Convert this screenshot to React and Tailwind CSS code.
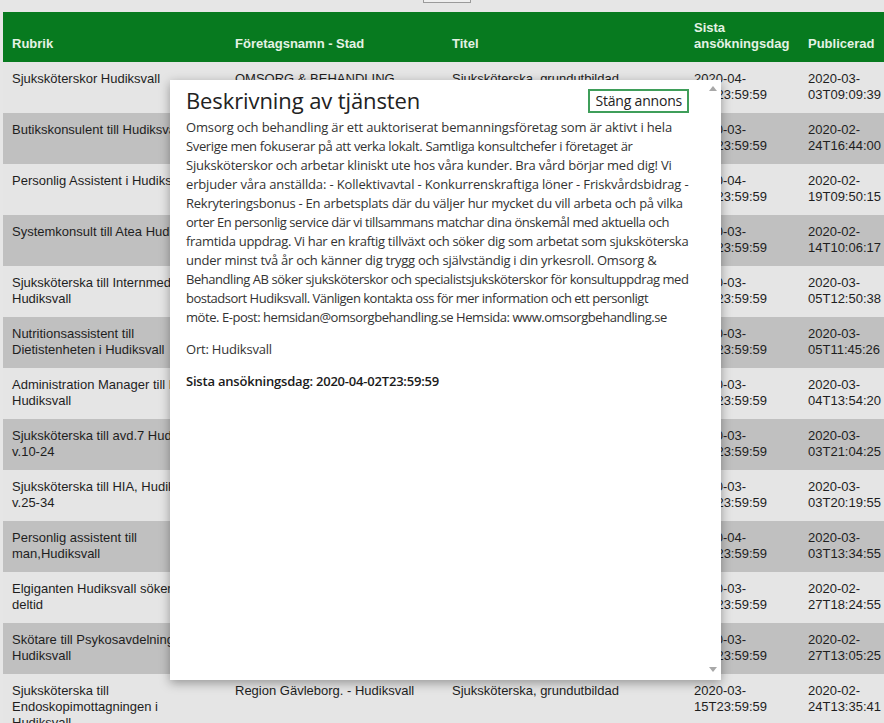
import React from 'react';

const rows = [
  { rubrik: ['Sjuksköterskor Hudiksvall'], foretag: ['OMSORG & BEHANDLING', 'AB - Hudiksvall'], titel: ['Sjuksköterska, grundutbildad'], sista: '2020-04-02T23:59:59', pub: '2020-03-03T09:09:39' },
  { rubrik: ['Butikskonsulent till Hudiksvall'], foretag: ['Elgiganten AB - Hudiksvall'], titel: ['Butikssäljare, elektronik'], sista: '2020-03-24T23:59:59', pub: '2020-02-24T16:44:00' },
  { rubrik: ['Personlig Assistent i Hudiksvall'], foretag: ['Humana Assistans AB -', 'Hudiksvall'], titel: ['Personlig assistent'], sista: '2020-04-19T23:59:59', pub: '2020-02-19T09:50:15' },
  { rubrik: ['Systemkonsult till Atea Hudiksvall'], foretag: ['Atea Sverige AB - Hudiksvall'], titel: ['Systemadministratör'], sista: '2020-03-15T23:59:59', pub: '2020-02-14T10:06:17' },
  { rubrik: ['Sjuksköterska till Internmedicin,', 'Hudiksvall'], foretag: ['Region Gävleborg. - Hudiksvall'], titel: ['Sjuksköterska, grundutbildad'], sista: '2020-03-22T23:59:59', pub: '2020-03-05T12:50:38' },
  { rubrik: ['Nutritionsassistent till', 'Dietistenheten i Hudiksvall'], foretag: ['Region Gävleborg. - Hudiksvall'], titel: ['Dietist'], sista: '2020-03-22T23:59:59', pub: '2020-03-05T11:45:26' },
  { rubrik: ['Administration Manager till H', 'Hudiksvall'], foretag: ['Hexatronic AB - Hudiksvall'], titel: ['Administratör'], sista: '2020-03-31T23:59:59', pub: '2020-03-04T13:54:20' },
  { rubrik: ['Sjuksköterska till avd.7 Hudiksvall', 'v.10-24'], foretag: ['Region Gävleborg. - Hudiksvall'], titel: ['Sjuksköterska, grundutbildad'], sista: '2020-03-17T23:59:59', pub: '2020-03-03T21:04:25' },
  { rubrik: ['Sjuksköterska till HIA, Hudiksvall', 'v.25-34'], foretag: ['Region Gävleborg. - Hudiksvall'], titel: ['Sjuksköterska, grundutbildad'], sista: '2020-03-17T23:59:59', pub: '2020-03-03T20:19:55' },
  { rubrik: ['Personlig assistent till', 'man,Hudiksvall'], foretag: ['Assistans AB - Hudiksvall'], titel: ['Personlig assistent'], sista: '2020-04-03T23:59:59', pub: '2020-03-03T13:34:55' },
  { rubrik: ['Elgiganten Hudiksvall söker säljare', 'deltid'], foretag: ['Elgiganten AB - Hudiksvall'], titel: ['Butikssäljare, elektronik'], sista: '2020-03-27T23:59:59', pub: '2020-02-27T18:24:55' },
  { rubrik: ['Skötare till Psykosavdelningen', 'Hudiksvall'], foretag: ['Region Gävleborg. - Hudiksvall'], titel: ['Skötare, psykiatri'], sista: '2020-03-27T23:59:59', pub: '2020-02-27T13:05:25' },
  { rubrik: ['Sjuksköterska till', 'Endoskopimottagningen i', 'Hudiksvall'], foretag: ['Region Gävleborg. - Hudiksvall'], titel: ['Sjuksköterska, grundutbildad'], sista: '2020-03-15T23:59:59', pub: '2020-02-24T13:35:41' },
];

// description lines, each with a small tracking tweak so the ragged edge follows the original
const bodyLines = [
  ['Omsorg och behandling är ett auktoriserat bemanningsföretag som är aktivt i hela', 'tracking-[-0.15px]'],
  ['Sverige men fokuserar på att verka lokalt. Samtliga konsultchefer i företaget är', 'tracking-[-0.35px]'],
  ['Sjuksköterskor och arbetar kliniskt ute hos våra kunder. Bra vård börjar med dig! Vi', 'tracking-[-0.2px]'],
  ['erbjuder våra anställda: - Kollektivavtal - Konkurrenskraftiga löner - Friskvårdsbidrag -', 'tracking-[-0.15px]'],
  ['Rekryteringsbonus - En arbetsplats där du väljer hur mycket du vill arbeta och på vilka', 'tracking-[-0.25px]'],
  ['orter En personlig service där vi tillsammans matchar dina önskemål med aktuella och', 'tracking-[-0.45px]'],
  ['framtida uppdrag. Vi har en kraftig tillväxt och söker dig som arbetat som sjuksköterska', 'tracking-[-0.3px]'],
  ['under minst två år och känner dig trygg och självständig i din yrkesroll. Omsorg &', 'tracking-[-0.25px]'],
  ['Behandling AB söker sjuksköterskor och specialistsjuksköterskor för konsultuppdrag med', 'tracking-[-0.45px]'],
  ['bostadsort Hudiksvall. Vänligen kontakta oss för mer information och ett personligt', 'tracking-[-0.5px]'],
  ['möte. E-post: hemsidan@omsorgbehandling.se Hemsida: www.omsorgbehandling.se', 'tracking-[-0.45px]'],
];

// splits a timestamp the way the narrow column wraps it
const splitDate = (d) => [d.slice(0, 8), d.slice(8)];

const Lines = ({ lines }) => (
  <>
    {lines.map((l, i) => (
      <div key={i} className="whitespace-nowrap">{l}</div>
    ))}
  </>
);

export default function App() {
  return (
    <div className="relative w-[884px] h-[723px] overflow-hidden bg-[#e6e6e6] font-['Liberation_Sans',Arial,sans-serif] text-[13px] leading-[16px] text-[#1e1e1e]">
      {/* scrolled-off button above the table */}
      <div className="flex h-[12px] items-start pl-[423px]">
        <div className="h-[3px] w-[48px] border-x border-b border-[#9a9a9a] bg-[#efefef]" />
      </div>

      <table className="ml-[3px] w-[891px] table-fixed border-collapse">
        <colgroup>
          <col className="w-[223px]" />
          <col className="w-[217px]" />
          <col className="w-[242px]" />
          <col className="w-[114px]" />
          <col className="w-[95px]" />
        </colgroup>
        <thead>
          <tr className="bg-[#077a1f] text-[#e4f2e4]">
            <th className="pl-[9px] pr-[9px] pt-[8px] pb-[10px] text-left align-bottom font-bold">Rubrik</th>
            <th className="pl-[9px] pr-[9px] pt-[8px] pb-[10px] text-left align-bottom font-bold">Företagsnamn - Stad</th>
            <th className="pl-[9px] pr-[9px] pt-[8px] pb-[10px] text-left align-bottom font-bold">Titel</th>
            <th className="pl-[9px] pr-[4px] pt-[8px] pb-[10px] text-left align-bottom font-bold">
              <div>Sista</div>
              <div>ansökningsdag</div>
            </th>
            <th className="pl-[9px] pr-[4px] pt-[8px] pb-[10px] text-left align-bottom font-bold">Publicerad</th>
          </tr>
        </thead>
        <tbody>
          {rows.map((r, i) => (
            <tr key={i} className={i % 2 === 0 ? 'bg-[#e5e5e5]' : 'bg-[#c0c0c0]'}>
              <td className="overflow-hidden pl-[9px] pt-[9px] pb-[10px] align-top"><Lines lines={r.rubrik} /></td>
              <td className="overflow-hidden pl-[9px] pt-[9px] pb-[10px] align-top"><Lines lines={r.foretag} /></td>
              <td className="overflow-hidden pl-[9px] pt-[9px] pb-[10px] align-top"><Lines lines={r.titel} /></td>
              <td className="overflow-hidden pl-[9px] pt-[9px] pb-[10px] align-top"><Lines lines={splitDate(r.sista)} /></td>
              <td className="overflow-hidden pl-[9px] pt-[9px] pb-[10px] align-top"><Lines lines={splitDate(r.pub)} /></td>
            </tr>
          ))}
        </tbody>
      </table>

      {/* job description dialog */}
      <div className="absolute left-[170px] top-[80px] flex h-[600px] w-[551px] bg-white shadow-[0_3px_10px_rgba(0,0,0,0.35)] font-['Segoe_UI','Open_Sans',sans-serif] text-[#333]">
        <div className="min-w-0 flex-1 overflow-hidden pl-[16px] pr-[15px] pt-[5px]">
          <div className="flex items-start justify-between">
            <h2 className="text-[22px] leading-[30px] tracking-[-0.1px] text-[#222]">Beskrivning av tjänsten</h2>
            <button className="mt-[4px] h-[24px] border-2 border-[#3f9e5a] px-[5px] text-[14px] leading-[18px] tracking-[-0.2px] text-[#222]">
              Stäng annons
            </button>
          </div>
          <div className="mt-[3px] text-[13px] leading-[19px]">
            {bodyLines.map(([text, track], i) => (
              <div key={i} className={`whitespace-nowrap ${track}`}>{text}</div>
            ))}
          </div>
          <p className="mt-[13px] text-[13px] leading-[19px] tracking-[-0.2px]">Ort: Hudiksvall</p>
          <p className="mt-[13px] text-[13px] leading-[19px] tracking-[-0.2px] font-semibold text-[#1a1a1a]">
            Sista ansökningsdag: 2020-04-02T23:59:59
          </p>
        </div>
        {/* idle scrollbar track */}
        <div className="flex w-[17px] shrink-0 flex-col items-center justify-between pt-[6px] pb-[8px]">
          <svg width="8" height="5" viewBox="0 0 8 5"><path d="M0 5 L4 0 L8 5 Z" fill="#a8a8a8" /></svg>
          <svg width="8" height="5" viewBox="0 0 8 5"><path d="M0 0 L4 5 L8 0 Z" fill="#a8a8a8" /></svg>
        </div>
      </div>
    </div>
  );
}
